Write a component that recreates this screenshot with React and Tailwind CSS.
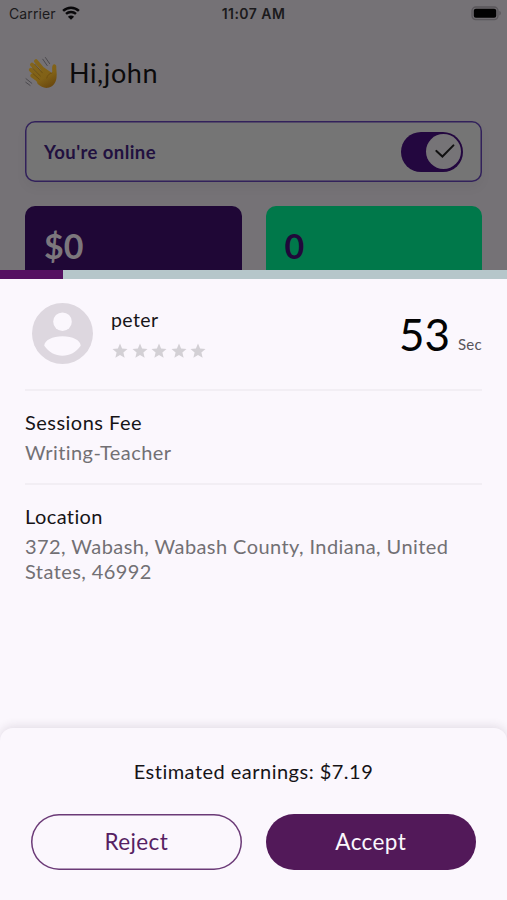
import React, { useState } from "react";

const SECONDS_TOTAL = 60;
const STARS = [1, 2, 3, 4, 5];

const WifiIcon = () => (
  <svg viewBox="0 0 18 14" className="-mt-[2px] h-[14px] w-[18px]" fill="none">
    <path d="M1.1 4.9C5.5.6 12.5.6 16.9 4.9" stroke="#09080a" strokeWidth="2.5" />
    <path d="M4 7.9c2.8-2.6 7.2-2.6 10 0" stroke="#09080a" strokeWidth="2.4" />
    <path d="M9 13.8 5.9 10.7c1.7-1.5 4.5-1.5 6.2 0z" fill="#09080a" />
  </svg>
);

const BatteryIcon = () => (
  <svg viewBox="0 0 31 15" className="-mt-[2px] h-[15px] w-[31px]">
    <rect x="1" y="1" width="26" height="12.6" rx="3.8" fill="#706d71" stroke="#5a575b" strokeWidth="1.3" />
    <rect x="2.8" y="2.8" width="22.4" height="9" rx="2" fill="#020202" />
    <path d="M28.4 5.1c1.9.6 1.9 3.8 0 4.4z" fill="#5a575b" />
  </svg>
);

const WaveIcon = () => (
  <svg viewBox="0 0 34 34" className="h-[34px] w-[34px]" fill="none">
    <defs>
      <linearGradient id="hand" x1="8" y1="4" x2="24" y2="32" gradientUnits="userSpaceOnUse">
        <stop stopColor="#84661c" />
        <stop offset=".65" stopColor="#816116" />
        <stop offset="1" stopColor="#6a480e" />
      </linearGradient>
    </defs>
    <g stroke="url(#hand)" strokeWidth="4" strokeLinecap="round">
      <path d="M11 5.2 20 16" />
      <path d="M7 8.6 17 19" />
      <path d="M5.8 13.8 16 23" />
      <path d="M7.3 19.6 16 26" />
    </g>
    <path
      d="M19 11.5 27 17c.8-2.2-.6-5.6.7-7.8 1.2-1.9 3.7-.9 3.6 1.3-.2 3.3.8 6.7.2 11.3-.5 4.8-3.4 9-8.4 10-4 .7-7.2-1-10.4-3.7L10 21z"
      fill="url(#hand)"
    />
    <path d="m9.8 8.2 7.5 8.6M7.7 12.4l7.6 7.5M8.1 17.7l6.2 5.6" stroke="#604510" strokeWidth=".7" strokeLinecap="round" />
    <path d="M27 17c-2.9.5-4.9 2.4-5.2 5" stroke="#69480d" strokeWidth=".7" strokeLinecap="round" />
    <path d="m17.8 3.2 4.4 6.4M20.4 1.5l4.2 6.1M1 22.7l5.8 4.6M.8 26.3l4.3 3.1" stroke="#4c4a4e" strokeWidth="1" strokeLinecap="round" />
  </svg>
);

const AvatarIcon = () => (
  <svg viewBox="0 0 61 61" className="h-[61px] w-[61px]">
    <circle cx="30.5" cy="30.5" r="30.5" fill="#ddd7df" />
    <circle cx="30.5" cy="18.7" r="9.3" fill="#fbf7fd" />
    <path d="M12.3 42.7c0-5.3 8.2-9.4 18.2-9.4s18.2 4.1 18.2 9.4c-4.4 6.5-11 10-18.2 10s-13.8-3.5-18.2-10z" fill="#fbf7fd" />
  </svg>
);

const StarIcon = () => (
  <svg viewBox="0 0 24 24" className="h-[18px] w-[18px]" fill="#d3d0d5">
    <path d="M12 17.27 18.18 21l-1.64-7.03L22 9.24l-7.19-.61L12 2 9.19 8.63 2 9.24l5.46 4.73L5.82 21z" />
  </svg>
);

const StatusBar = () => (
  <div className="grid h-[28px] grid-cols-3 items-center pl-[9px] pr-[5px] font-['Inter',sans-serif] text-[14px] text-[#1b1a1c]">
    <div className="flex items-center gap-[6px]">
      <span className="-mt-[2px] tracking-[0.1px]">Carrier</span>
      <WifiIcon />
    </div>
    <span className="-mt-[2px] -ml-[4px] text-center font-semibold tracking-[0.45px] whitespace-nowrap">11:07 AM</span>
    <div className="flex justify-end">
      <BatteryIcon />
    </div>
  </div>
);

const Toggle = ({ checked, onChange }) => (
  <button
    role="switch"
    aria-checked={checked}
    onClick={() => onChange(!checked)}
    className={`flex h-[40px] w-[62px] items-center rounded-full bg-[#23073f] p-[2px] ${checked ? "justify-end" : "justify-start"}`}
  >
    <span className="flex h-[35px] w-[35px] items-center justify-center rounded-full bg-[#767477]">
      <svg viewBox="0 0 20 14" className="ml-[2px] -mt-[1px] h-[14px] w-[20px]" fill="none">
        <path d="m1.4 6.9 6 5.6L18.4 1.4" stroke="#111" strokeWidth="2" strokeLinecap="round" />
      </svg>
    </span>
  </button>
);

const Detail = ({ title, children }) => (
  <section className="h-[94px] border-b-2 border-[#f2eef4] pt-[19px]">
    <h3 className="text-[20px] leading-[24px] tracking-[0.48px] text-[#161417]">{title}</h3>
    <p className="mt-[6px] text-[20px] leading-[25px] tracking-[0.42px] text-[#727074]">{children}</p>
  </section>
);

const App = () => {
  const [online, setOnline] = useState(true);
  const [seconds] = useState(53);
  const elapsed = ((SECONDS_TOTAL - seconds + 0.5) / SECONDS_TOTAL) * 100;

  return (
    <div className="flex h-[900px] w-full flex-col overflow-hidden bg-[#fbf7fd] font-['Lato',sans-serif]">
      {/* Dimmed home screen */}
      <div className="h-[270px] shrink-0 overflow-hidden bg-[#757276]">
        <StatusBar />
        <div className="mt-[27px] flex h-[36px] items-center gap-[10px] pl-[25px]">
          <WaveIcon />
          <h1 className="text-[27px] leading-[36px] tracking-[0.6px] text-[#0b0a0b]">Hi,john</h1>
        </div>

        <div className="mx-[25px] mt-[30px] flex h-[61px] items-center justify-between rounded-[10px] bg-[#757575] px-[19px] shadow-[inset_0_0_0_1.5px_#32215b,0_6px_12px_rgba(0,0,0,0.04)]">
          <span className="text-[18.5px] leading-[24px] font-bold tracking-[0.42px] text-[#21103f]">
            You're online
          </span>
          <Toggle checked={online} onChange={setOnline} />
        </div>

        <div className="mx-[25px] mt-[24px] grid grid-cols-2 gap-[24px] text-[34px] leading-[40px] font-bold">
          <div className="h-[90px] rounded-[10px] bg-[#1f0736] pt-[20px] pl-[19px] text-[#7c777d]">$0</div>
          <div className="h-[90px] rounded-[10px] bg-[#00784a] pt-[20px] pl-[19px] text-[#20083a]">0</div>
        </div>
      </div>

      {/* Countdown */}
      <div className="h-[9px] shrink-0 bg-[#b6c6ca]">
        <div className="h-full bg-[#551061]" style={{ width: `${elapsed}%` }} />
      </div>

      {/* Request details */}
      <main className="flex-1 px-[25px]">
        <div className="flex h-[112px] items-start border-b-2 border-[#f2eef4] pt-[24px] pl-[6.5px]">
          <AvatarIcon />
          <div className="ml-[18.5px] pt-[5px]">
            <h2 className="text-[19.5px] leading-[24px] tracking-[0.4px] text-[#161417]">peter</h2>
            <div className="mt-[10px] flex gap-[1.6px]">
              {STARS.map((star) => (
                <StarIcon key={star} />
              ))}
            </div>
          </div>
          <div className="ml-auto flex items-end gap-[8px] pt-[6px]">
            <span className="text-[44px] leading-[50px] text-[#030303]">{seconds}</span>
            <span className="mb-[6px] text-[15px] leading-[18px] tracking-[0.3px] text-[#57545a]">Sec</span>
          </div>
        </div>
        <Detail title="Sessions Fee">Writing-Teacher</Detail>
        <section className="pt-[19px]">
          <h3 className="text-[20px] leading-[24px] tracking-[0.4px] text-[#161417]">Location</h3>
          <p className="mt-[6px] text-[20px] leading-[24.5px] tracking-[0.42px] text-[#727074]">
            372, Wabash, Wabash County, Indiana, United
            <br />
            States, 46992
          </p>
        </section>
      </main>

      {/* Actions */}
      <footer className="h-[172px] shrink-0 rounded-t-[13px] bg-[#fbf7fd] px-[31px] pt-[31px] shadow-[0_-2px_10px_rgba(50,30,60,0.12)]">
        <p className="text-center text-[20px] leading-[24px] tracking-[0.48px] text-[#161417]">
          Estimated earnings: $7.19
        </p>
        <div className="mt-[31px] grid grid-cols-2 gap-[24px] text-[22.5px] leading-[28px] tracking-[0.4px]">
          <button className="h-[56px] rounded-full text-[#571f63] shadow-[inset_0_0_0_1.5px_#6b3a77]">
            Reject
          </button>
          <button className="h-[56px] rounded-full bg-[#521959] text-[#fbf7fd]">Accept</button>
        </div>
      </footer>
    </div>
  );
};

export default App;
